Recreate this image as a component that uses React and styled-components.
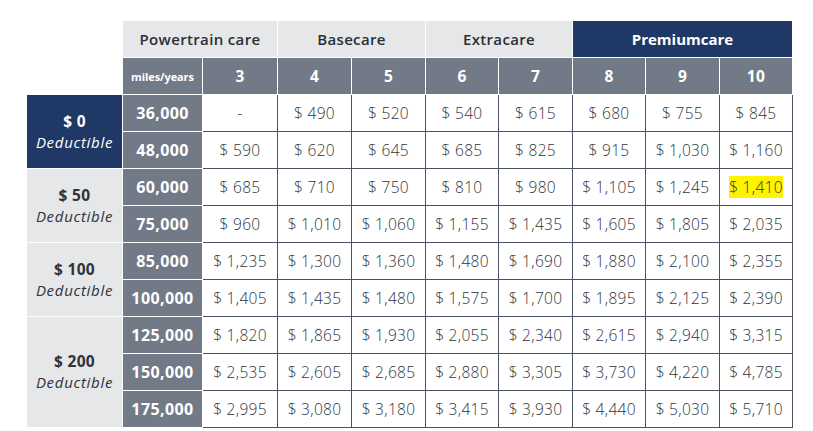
import React from "react";
import styled, { createGlobalStyle, css } from "styled-components";

const Global = createGlobalStyle`
  html, body { margin: 0; padding: 0; background: #fff; }
  body { font-family: "Open Sans", "Liberation Sans", sans-serif; }
`;

const NAVY = "#1f3865";
const LIGHT = "#e6e7e9";
const GRAY = "#737a87";
const LINE = "#4a5262";
const INK = "#2f343c";

const Page = styled.div`
  padding: 21px 0 0 27px;
  width: 813px;
  height: 431px;
  box-sizing: border-box;
  overflow: hidden;
`;

const Grid = styled.div`
  display: grid;
  grid-template-columns: 96px 80px 75px 74px 74px 73px 74px 73px 74px 73px;
  grid-auto-rows: 37px;
`;

const Cell = styled.div`
  box-sizing: border-box;
  display: flex;
  align-items: center;
  justify-content: center;
  border-right: 1px solid #fff;
  border-bottom: 1px solid #fff;
  white-space: nowrap;
`;

const Corner = styled(Cell)`
  grid-row: span 2;
`;

const PlanHead = styled(Cell)`
  grid-column: span ${(p) => p.$span};
  background: ${(p) => (p.$premium ? NAVY : LIGHT)};
  color: ${(p) => (p.$premium ? "#fff" : "#2b2f36")};
  font-size: 15px;
  font-weight: ${(p) => (p.$premium ? 700 : 600)};
  letter-spacing: ${(p) => (p.$premium ? "0" : "0.35px")};
`;

const SubHead = styled(Cell)`
  background: ${GRAY};
  color: #fff;
  font-weight: 700;
  font-size: ${(p) => (p.$small ? "11px" : "15.5px")};
  letter-spacing: ${(p) => (p.$small ? "-0.1px" : "0.3px")};
`;

const Deductible = styled(Cell)`
  grid-row: span ${(p) => p.$rows};
  flex-direction: column;
  background: ${(p) => (p.$active ? NAVY : LIGHT)};
  color: ${(p) => (p.$active ? "#fff" : "#2f333a")};
  line-height: 21px;
`;

const Amount = styled.div`
  font-weight: 700;
  font-size: 15.5px;
  letter-spacing: 0.3px;
`;

const DedLabel = styled.div`
  font-style: italic;
  font-size: 15px;
  letter-spacing: 0.7px;
`;

const Miles = styled(Cell)`
  background: ${GRAY};
  color: #fff;
  font-weight: 700;
  font-size: 16px;
  letter-spacing: 0.4px;
`;

const Price = styled(Cell)`
  border-right-color: ${LINE};
  border-bottom-color: ${LINE};
  color: ${INK};
  font-size: 15.5px;
  font-weight: 300;
  letter-spacing: 0.3px;
`;

const Mark = styled.span`
  ${(p) =>
    p.$on &&
    css`
      background: #fff200;
    `}
`;

const groups = [
  {
    amount: "$ 0",
    active: true,
    rows: [
      ["36,000", ["-", "$ 490", "$ 520", "$ 540", "$ 615", "$ 680", "$ 755", "$ 845"]],
      ["48,000", ["$ 590", "$ 620", "$ 645", "$ 685", "$ 825", "$ 915", "$ 1,030", "$ 1,160"]],
    ],
  },
  {
    amount: "$ 50",
    rows: [
      ["60,000", ["$ 685", "$ 710", "$ 750", "$ 810", "$ 980", "$ 1,105", "$ 1,245", "$ 1,410"]],
      ["75,000", ["$ 960", "$ 1,010", "$ 1,060", "$ 1,155", "$ 1,435", "$ 1,605", "$ 1,805", "$ 2,035"]],
    ],
  },
  {
    amount: "$ 100",
    rows: [
      ["85,000", ["$ 1,235", "$ 1,300", "$ 1,360", "$ 1,480", "$ 1,690", "$ 1,880", "$ 2,100", "$ 2,355"]],
      ["100,000", ["$ 1,405", "$ 1,435", "$ 1,480", "$ 1,575", "$ 1,700", "$ 1,895", "$ 2,125", "$ 2,390"]],
    ],
  },
  {
    amount: "$ 200",
    rows: [
      ["125,000", ["$ 1,820", "$ 1,865", "$ 1,930", "$ 2,055", "$ 2,340", "$ 2,615", "$ 2,940", "$ 3,315"]],
      ["150,000", ["$ 2,535", "$ 2,605", "$ 2,685", "$ 2,880", "$ 3,305", "$ 3,730", "$ 4,220", "$ 4,785"]],
      ["175,000", ["$ 2,995", "$ 3,080", "$ 3,180", "$ 3,415", "$ 3,930", "$ 4,440", "$ 5,030", "$ 5,710"]],
    ],
  },
];

export default function App() {
  return (
    <Page>
      <Global />
      <Grid>
        <Corner />
        <PlanHead $span={2}>Powertrain care</PlanHead>
        <PlanHead $span={2}>Basecare</PlanHead>
        <PlanHead $span={2}>Extracare</PlanHead>
        <PlanHead $span={3} $premium>Premiumcare</PlanHead>
        <SubHead $small>miles/years</SubHead>
        {[3, 4, 5, 6, 7, 8, 9, 10].map((y) => (
          <SubHead key={y}>{y}</SubHead>
        ))}
        {groups.map((g) => (
          <React.Fragment key={g.amount}>
            <Deductible $rows={g.rows.length} $active={g.active}>
              <Amount>{g.amount}</Amount>
              <DedLabel>Deductible</DedLabel>
            </Deductible>
            {g.rows.map(([miles, prices]) => (
              <React.Fragment key={miles}>
                <Miles>{miles}</Miles>
                {prices.map((p, i) => (
                  <Price key={i}>
                    <Mark $on={miles === "60,000" && i === 7}>{p}</Mark>
                  </Price>
                ))}
              </React.Fragment>
            ))}
          </React.Fragment>
        ))}
      </Grid>
    </Page>
  );
}
